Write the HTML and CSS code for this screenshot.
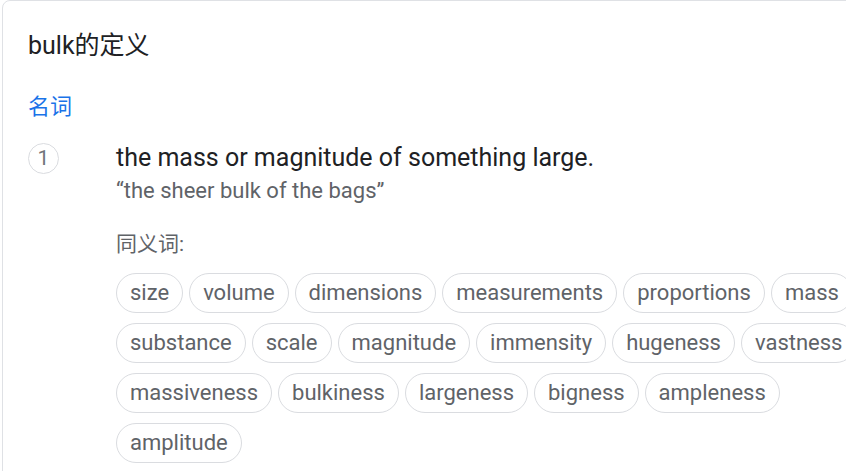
FILE: index.html
```html
<!DOCTYPE html>
<html lang="zh-CN">
<head>
<meta charset="utf-8">
<title>bulk的定义</title>
<link rel="stylesheet" href="styles.css">
</head>
<body>
<div class="card">
  <h2 class="title">bulk的定义</h2>
  <div class="pos">名词</div>
  <div class="sense">
    <div class="num">1</div>
    <div class="body">
      <div class="def">the mass or magnitude of something large.</div>
      <div class="example">“the sheer bulk of the bags”</div>
      <div class="syn-label">同义词:</div>
      <div class="chips">
        <span class="chip">size</span>
        <span class="chip">volume</span>
        <span class="chip">dimensions</span>
        <span class="chip">measurements</span>
        <span class="chip">proportions</span>
        <span class="chip">mass</span>
        <span class="chip">substance</span>
        <span class="chip">scale</span>
        <span class="chip">magnitude</span>
        <span class="chip">immensity</span>
        <span class="chip">hugeness</span>
        <span class="chip">vastness</span>
        <span class="chip">massiveness</span>
        <span class="chip">bulkiness</span>
        <span class="chip">largeness</span>
        <span class="chip">bigness</span>
        <span class="chip">ampleness</span>
        <span class="chip">amplitude</span>
      </div>
    </div>
  </div>
</div>
</body>
</html>
```
FILE: styles.css
```css
html, body {
  margin: 0;
  padding: 0;
  background: #ffffff;
  overflow: hidden;
}
body {
  font-family: Roboto, "Noto Sans CJK SC", sans-serif;
  color: #202124;
}
.card {
  margin-left: 2px;
  width: 900px;
  height: 600px;
  border: 1px solid #dfe1e5;
  border-radius: 8px;
  box-sizing: border-box;
  padding: 29px 0 0 25px;
}
.title {
  margin: 0;
  font-weight: 400;
  font-size: 25px;
  line-height: 32px;
  color: #202124;
}
.pos {
  margin-top: 31px;
  font-size: 22px;
  line-height: 28px;
  color: #1a73e8;
}
.sense {
  display: flex;
  margin-top: 23px;
}
.num {
  flex: none;
  width: 31px;
  height: 31px;
  box-sizing: border-box;
  border: 1px solid #dadce0;
  border-radius: 50%;
  font-size: 21px;
  line-height: 29px;
  text-align: center;
  color: #70757a;
  margin-top: -1px;
}
.body {
  margin-left: 57px;
}
.def {
  font-size: 25px;
  line-height: 28px;
  color: #202124;
}
.example {
  margin-top: 6px;
  font-size: 22px;
  line-height: 26px;
  color: #5f6368;
}
.syn-label {
  margin-top: 26px;
  font-size: 21px;
  line-height: 28px;
  color: #5f6368;
}
.chips {
  margin-top: 15px;
  width: 770px;
  display: flex;
  flex-wrap: wrap;
  gap: 10px 6px;
}
.chip {
  height: 40px;
  box-sizing: border-box;
  border: 1px solid #dadce0;
  border-radius: 20px;
  padding: 0 13px;
  font-size: 22px;
  line-height: 38px;
  color: #5f6368;
  white-space: nowrap;
}
```
